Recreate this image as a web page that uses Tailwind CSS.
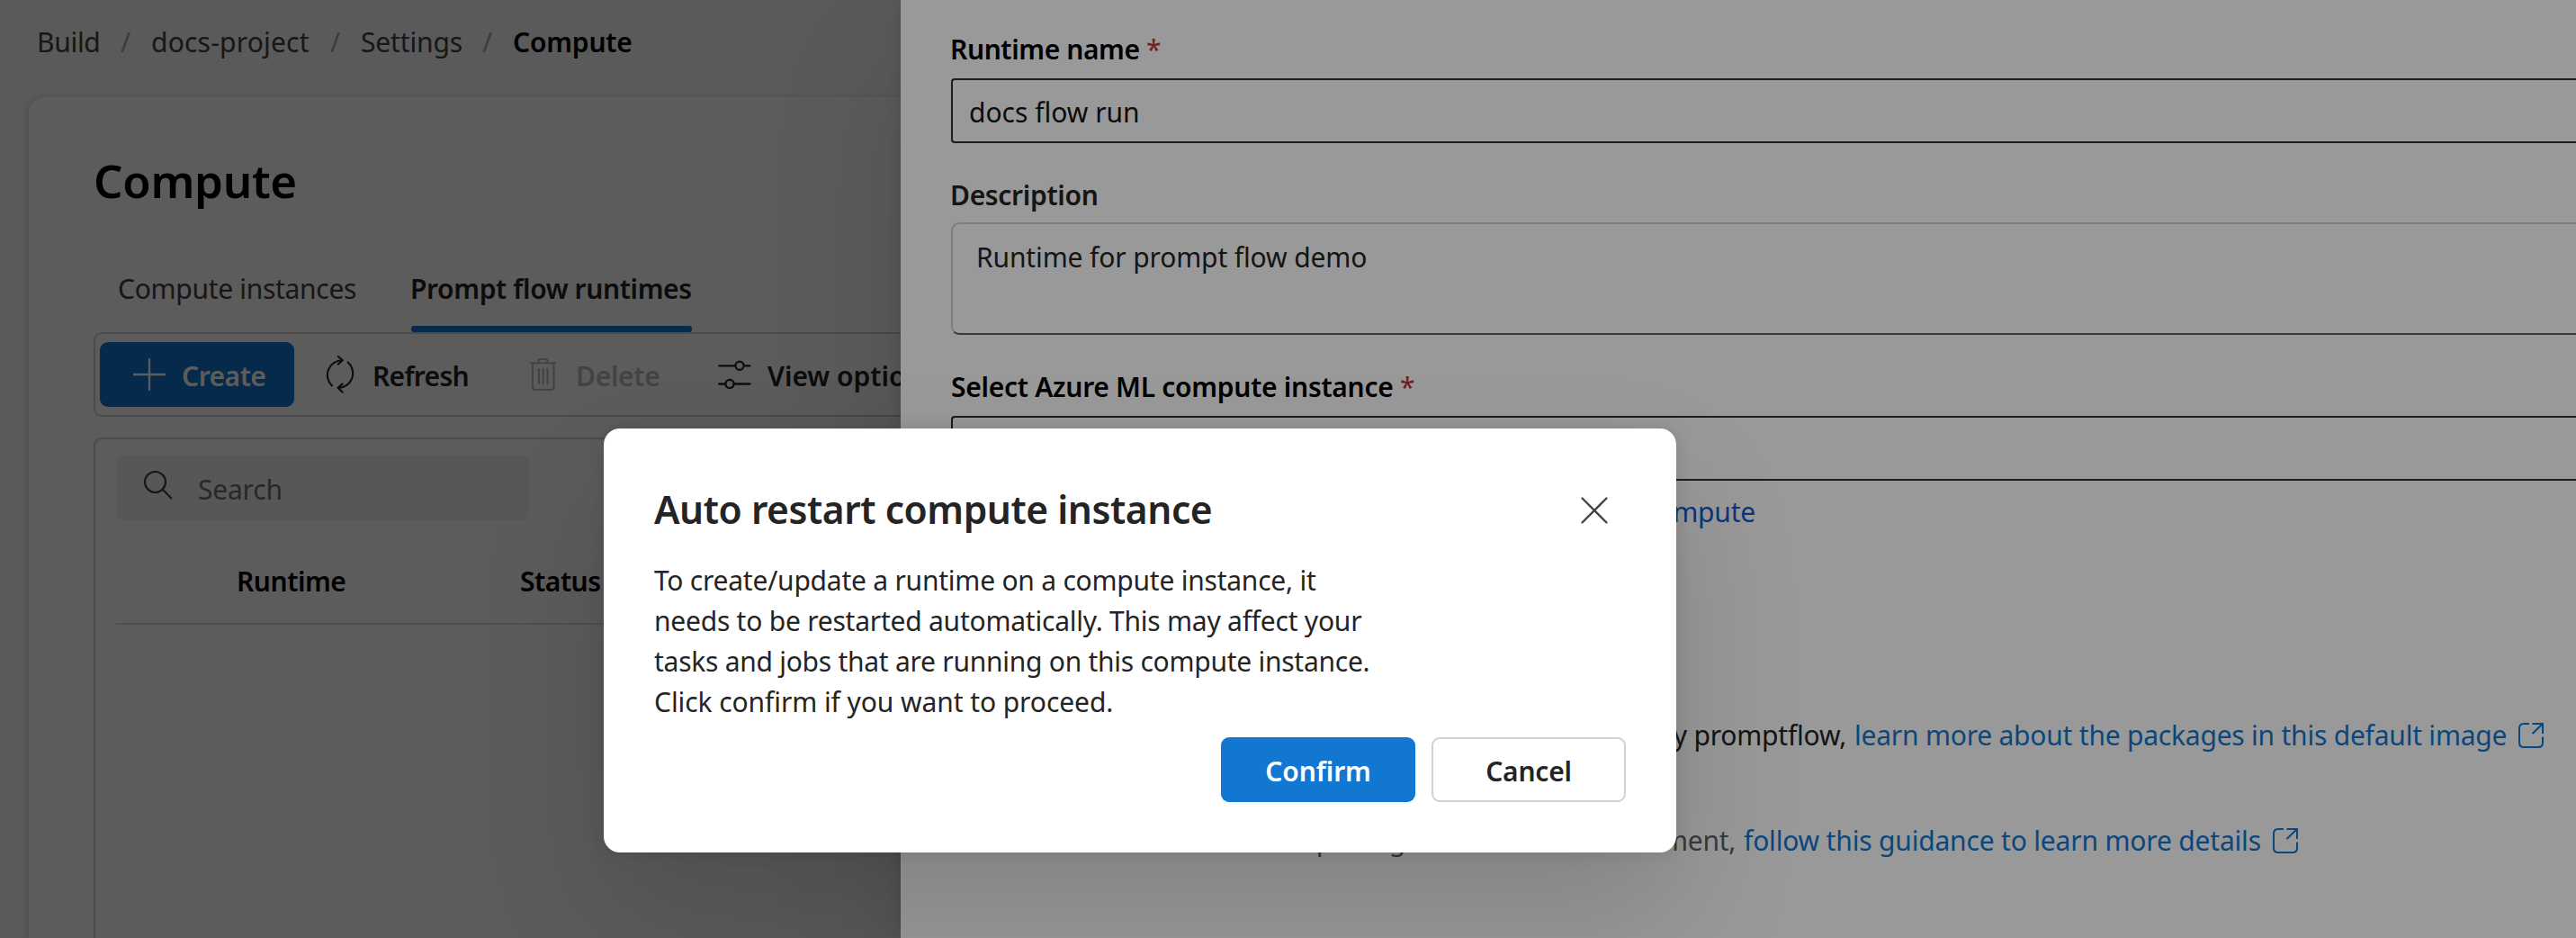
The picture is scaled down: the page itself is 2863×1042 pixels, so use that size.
<!DOCTYPE html>
<html lang="en">
<head>
<meta charset="utf-8">
<title>Compute</title>
<script src="https://cdn.jsdelivr.net/npm/@tailwindcss/browser@4"></script>
</head>
<body class="relative h-[1042px] w-[2863px] overflow-hidden bg-[#fafafa] font-['Noto_Sans','Open_Sans',sans-serif] text-[30px] leading-[45px] text-[#242424]">

<!-- Compute page -->
<div class="flex h-[1042px] flex-col pt-6">
  <nav class="flex gap-[22px] whitespace-nowrap pl-[41px] text-[#424242]">
    <span class="w-[71px] tracking-[-0.3px]">Build</span>
    <span class="w-3 text-[#a8a8a8]">/</span>
    <span class="w-[177px] tracking-[0.2px]">docs-project</span>
    <span class="w-3 text-[#a8a8a8]">/</span>
    <span class="w-[113px] tracking-[-0.15px]">Settings</span>
    <span class="w-3 text-[#a8a8a8]">/</span>
    <span class="font-semibold tracking-[-0.2px] text-black">Compute</span>
  </nav>
  <main class="ml-8 mt-[39px] flex flex-1 flex-col rounded-tl-[18px] bg-white pl-[72px] pt-14 shadow-[0_2px_9px_rgba(0,0,0,0.22)]">
    <h1 class="text-[51px] font-semibold leading-[72px] tracking-[-0.3px] text-black">Compute</h1>
    <div class="mt-[62px] flex h-[71px] whitespace-nowrap">
      <div class="ml-[27px] w-[326px] tracking-[-0.3px] text-[#424242]">Compute instances</div>
      <div class="flex w-[312px] flex-col justify-between font-semibold tracking-[-0.38px]">
        <span class="-ml-[1px]">Prompt flow runtimes</span>
        <span class="h-[7px] rounded-[3px] bg-[#1177d1]"></span>
      </div>
    </div>
    <div class="flex h-[94px] items-center whitespace-nowrap rounded-l-[9px] border-2 border-r-0 border-[#d1d1d1] pl-[5px] font-semibold">
      <button class="flex h-[72px] w-[216px] items-center rounded-[9px] bg-[#1177d1] pl-[37px] text-white">
        <svg class="size-9" viewBox="0 0 36 36" stroke="currentColor" stroke-width="2.3" fill="none"><path d="M18 0V36M0 18H36"/></svg>
        <span class="ml-[18px] pt-[3px] tracking-[-0.5px]">Create</span>
      </button>
      <svg class="ml-[34px] h-[42px] w-9" viewBox="0 0 36 42" stroke="currentColor" stroke-width="2.1" stroke-linecap="round" stroke-linejoin="round" fill="none"><path d="M8 33.500A16.400 16.400 0 0 1 19.800 5.200M14.800 1L19.800 5.300L14.800 9.600M25.800 7.500A16.400 16.400 0 0 1 14.800 36M19.600 31.400L14.600 35.900L19.600 40.600"/></svg>
      <span class="ml-[17px] w-[107px] pt-[3px] tracking-[-0.7px]">Refresh</span>
      <svg class="ml-[68px] h-9 w-[29px] text-[#bdbdbd]" viewBox="0 0 29 36" stroke="currentColor" stroke-width="2.1" fill="none"><path d="M0 5.2H29M9.5 5V3Q9.5 1 11.5 1H17.5Q19.5 1 19.5 3V5M3 5V32Q3 35 6 35H23.500Q26.500 35 26.500 32V5M10 11V29M14.700 11V29M19.500 11V29"/></svg>
      <span class="ml-[22px] w-[94px] pt-[3px] tracking-[-0.3px] text-[#bdbdbd]">Delete</span>
      <svg class="ml-16 h-9 w-[37px]" viewBox="0 0 37 36" stroke="currentColor" stroke-width="2.3" stroke-linecap="round" fill="none"><path d="M1.200 8.300H18.500M29.500 8.300H35.500M1.200 28.500H7.500M18.500 28.500H35.500"/><circle cx="24" cy="8.300" r="4.600"/><circle cx="13" cy="28.500" r="4.600"/></svg>
      <span class="ml-[18px] pt-[3px]">View options</span>
    </div>
    <div class="mt-[23px] flex flex-1 flex-col rounded-tl-[9px] border-l-2 border-t-2 border-[#d1d1d1] pl-[23px] pt-[18px]">
      <div class="flex h-[72px] w-[459px] rounded-[9px] bg-[#f2f2f2] pl-[31px] text-[#707070]">
        <svg class="mt-[17px] size-8 text-[#424242]" viewBox="0 0 32 32" stroke="currentColor" stroke-width="2.2" fill="none"><circle cx="12.500" cy="12.500" r="11.500"/><path d="M20.500 20.500L31 31"/></svg>
        <span class="ml-[28px] mt-[15px] tracking-[-0.2px]">Search</span>
      </div>
      <div class="mt-[44px] flex h-[72px] border-b-2 border-[#e0e0e0] pl-[134px] pt-px font-semibold tracking-[-0.45px] text-black">
        <span class="w-[315px]">Runtime</span>
        <span>Status</span>
      </div>
    </div>
  </main>
</div>
<div class="absolute inset-0 bg-black/40"></div>

<!-- Runtime drawer -->
<aside class="absolute inset-y-0 left-[1001px] right-0 flex flex-col whitespace-nowrap bg-white pl-14 pt-8 shadow-[0_0_18px_rgba(0,0,0,0.12),0_72px_144px_rgba(0,0,0,0.14)]">
  <label class="-ml-[1px] font-semibold tracking-[-0.4px] text-black">Runtime name <span class="font-normal text-[#bc2f32]">*</span></label>
  <div class="mt-[10px] h-[72px] rounded-l-[4px] border-2 border-r-0 border-[#323130] pl-[18px] pt-[13px] text-[#141414]">docs flow run</div>
  <label class="-ml-[1px] mt-[35px] font-semibold tracking-[-0.32px]">Description</label>
  <div class="mt-2 h-[125px] rounded-l-[9px] border-2 border-r-0 border-[#d1d1d1] border-b-[#616161] pl-[26px] pt-[14px] tracking-[-0.13px]">Runtime for prompt flow demo</div>
  <label class="mt-[35px] font-semibold tracking-[-0.28px] text-black">Select Azure ML compute instance <span class="font-normal text-[#bc2f32]">*</span></label>
  <div class="mt-[10px] h-[72px] rounded-l-[4px] border-2 border-r-0 border-[#323130]"></div>
  <div class="mt-3 w-[894px] text-right tracking-[-0.2px] text-[#0f5bd0]">compute</div>
  <div class="mt-[203px] flex items-center">
    <span class="w-[995px] text-right tracking-[-0.2px]">by promptflow,</span>
    <a class="ml-[9px] flex items-center text-[#1277cf]"><span class="w-[726px] tracking-[-0.22px]">learn more about the packages in this default image</span>
      <svg class="ml-3 size-7" viewBox="0 0 28 28" stroke="currentColor" stroke-width="2" fill="none"><path d="M12 1H6Q1 1 1 6V22Q1 27 6 27H22Q27 27 27 22V15.500M15.500 1H27V12M27 1L15.500 12"/></svg></a>
  </div>
  <div class="mt-[72px] flex items-center">
    <span class="w-[872px] text-right tracking-[-0.3px] text-[#616161]">packages in custom environment,</span>
    <a class="ml-[9px] flex items-center text-[#1277cf]"><span class="w-[577px] tracking-[-0.18px]">follow this guidance to learn more details</span>
      <svg class="ml-[11px] size-7" viewBox="0 0 28 28" stroke="currentColor" stroke-width="2" fill="none"><path d="M12 1H6Q1 1 1 6V22Q1 27 6 27H22Q27 27 27 22V15.500M15.500 1H27V12M27 1L15.500 12"/></svg></a>
  </div>
</aside>
<div class="absolute inset-0 bg-black/40"></div>

<!-- Confirmation dialog -->
<section class="absolute left-[671px] top-[476px] flex h-[471px] w-[1192px] flex-col whitespace-nowrap rounded-[18px] bg-white pl-14 pr-14 pt-[58px] shadow-[0_0_18px_rgba(0,0,0,0.12),0_72px_144px_rgba(0,0,0,0.14)]">
  <div class="flex items-center justify-between pr-5">
    <h2 class="text-[42.5px] font-semibold leading-[63px] tracking-[-0.45px]">Auto restart compute instance</h2>
    <svg class="mt-[3px] size-[30px] text-[#424242]" viewBox="0 0 30 30" stroke="currentColor" stroke-width="2.3" stroke-linecap="round" fill="none"><path d="M1.500 1.500L28.500 28.500M28.500 1.500L1.500 28.500"/></svg>
  </div>
  <p class="mt-[25px] tracking-[-0.23px]">To create/update a runtime on a compute instance, it<br>needs to be restarted automatically. This may affect your<br><span class="tracking-[-0.26px]">tasks and jobs that are running on this compute instance.</span><br><span class="tracking-[-0.08px]">Click confirm if you want to proceed.</span></p>
  <div class="mt-[17px] flex justify-end gap-[18px] font-semibold">
    <button class="h-[72px] w-[216px] rounded-[9px] bg-[#1177d1] pt-[2px] tracking-[-0.1px] text-white">Confirm</button>
    <button class="h-[72px] w-[216px] rounded-[9px] border-2 border-[#d1d1d1] pt-[2px] tracking-[-0.2px]">Cancel</button>
  </div>
</section>
</body>
</html>
